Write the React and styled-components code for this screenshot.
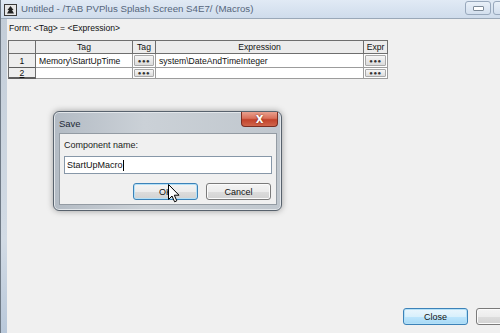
import React from "react";
import styled, { createGlobalStyle } from "styled-components";

const GlobalStyle = createGlobalStyle`
  body {
    margin: 0;
    background: #f0f0f0;
    font-family: "Liberation Sans", Arial, sans-serif;
  }
`;

const Screen = styled.div`
  position: relative;
  display: flex;
  flex-direction: column;
  width: 500px;
  height: 333px;
  overflow: hidden;
  box-sizing: border-box;
  border-left: 1px solid #6f7a86;
  background: #f0f0f0;
`;

const TitleBar = styled.div`
  display: flex;
  align-items: flex-start;
  flex-shrink: 0;
  height: 18px;
  margin-right: -30px;
  padding-right: 11px;
  background: linear-gradient(#e1eaf5, #cfdcec);
  border-bottom: 1px solid #9aa8b8;
`;

const AppIcon = styled.svg`
  flex-shrink: 0;
  margin: 4px 0 0 3px;
`;

const Title = styled.div`
  flex: 1;
  margin-left: 4px;
  line-height: 18px;
  font-size: 9.7px;
  color: #56667c;
  white-space: nowrap;
`;

const CaptionButton = styled.div`
  display: flex;
  align-items: center;
  justify-content: center;
  flex-shrink: 0;
  width: 26px;
  height: 14px;
  margin: 1px 0 0 2px;
  box-sizing: border-box;
  border: 1px solid #98a8bc;
  border-radius: 3px;
  background: linear-gradient(#e9f0f8, #d3dfee);
  span {
    width: 9px;
    height: 3px;
    border: 1px solid #7d8a98;
    border-radius: 1px;
    background: #fff;
  }
`;

const Body = styled.div`
  display: flex;
  flex: 1;
`;

const FrameStrip = styled.div`
  width: 6px;
  flex-shrink: 0;
  background: linear-gradient(#c3cdd8, #d2dbe5 70%, #b9c8da);
`;

const Content = styled.div`
  display: flex;
  flex-direction: column;
  flex: 1;
  margin-right: -60px;
  padding: 3px 0 8px 1px;
  background: #f0f0f0;
`;

const FormLabel = styled.div`
  padding-left: 1px;
  line-height: 12px;
  font-size: 8.6px;
  color: #111;
`;

const Grid = styled.div`
  display: grid;
  grid-template-columns: 27px 97px 23px 208px 24px;
  grid-template-rows: 13px 14px 11px;
  width: max-content;
  margin-top: 6px;
  border-top: 1px solid #6e6e6e;
  border-left: 1px solid #6e6e6e;
  font-size: 8.6px;
  color: #111;
`;

const HeadCell = styled.div`
  display: flex;
  align-items: center;
  justify-content: center;
  box-sizing: border-box;
  background: #ececec;
  border-right: 1px solid #6e6e6e;
  border-bottom: 1px solid #6e6e6e;
`;

const NumCell = styled(HeadCell)`
  background: #eeeeee;
  border-bottom: ${(p) => (p.$last ? "2px" : "1px")} solid #5e5e5e;
  text-decoration: ${(p) => (p.$last ? "underline" : "none")};
`;

const DataCell = styled.div`
  display: flex;
  align-items: center;
  box-sizing: border-box;
  padding-left: 3px;
  background: #fff;
  border-right: 1px solid #9c9c9c;
  border-bottom: 1px solid #9c9c9c;
  white-space: nowrap;
  overflow: hidden;
`;

const ButtonCell = styled.div`
  display: flex;
  align-items: center;
  justify-content: center;
  box-sizing: border-box;
  padding: 1px;
  background: #fff;
  border-right: 1px solid #9c9c9c;
  border-bottom: 1px solid #9c9c9c;
`;

const DotsButton = styled.div`
  display: flex;
  align-items: center;
  justify-content: center;
  width: 100%;
  height: 100%;
  box-sizing: border-box;
  border: 1px solid #a9a9a9;
  border-radius: 1px;
  background: linear-gradient(#f6f6f6, #dcdcdc);
  font-size: 6px;
  letter-spacing: 0.5px;
  color: #333;
`;

const Footer = styled.div`
  display: flex;
  justify-content: flex-end;
  gap: 8px;
  margin-top: auto;
  padding-right: 19px;
`;

const PushButton = styled.div`
  display: flex;
  align-items: center;
  justify-content: center;
  width: 65px;
  height: 17px;
  box-sizing: border-box;
  border: 1px solid ${(p) => (p.$focus ? "#3c82b8" : "#7a7a7a")};
  border-radius: 3px;
  background: ${(p) =>
    p.$hot
      ? "linear-gradient(#eaf6fd 0%, #d9f0fc 50%, #bee6fd 51%, #a7d9f5 100%)"
      : "linear-gradient(#f4f4f4 0%, #ececec 50%, #dddddd 51%, #d2d2d2 100%)"};
  box-shadow: ${(p) => (p.$focus ? "inset 0 0 0 1px #b4e0f7" : "inset 0 0 0 1px #fbfbfb")};
  font-size: 9px;
  color: #111;
`;

const Dialog = styled.div`
  position: absolute;
  left: 52px;
  top: 111px;
  display: flex;
  flex-direction: column;
  width: 229px;
  height: 100px;
  box-sizing: border-box;
  padding: 0 4px 5px 5px;
  border: 1px solid #58626d;
  border-radius: 6px;
  background: linear-gradient(90deg, #b3bbc4, #cbd1d7 40%, #c0c7ce);
  box-shadow: 0 0 6px rgba(0, 0, 0, 0.35), inset 0 0 0 1px #e2e6ea;
`;

const DialogHead = styled.div`
  display: flex;
  align-items: flex-start;
  height: 21px;
`;

const DialogTitle = styled.div`
  flex: 1;
  padding: 6px 0 0 0;
  font-size: 9.5px;
  color: #1e2a36;
`;

const CloseX = styled.div`
  display: flex;
  align-items: center;
  justify-content: center;
  width: 37px;
  height: 15px;
  margin-right: -1px;
  box-sizing: border-box;
  border: 1px solid #7a2e22;
  border-top: none;
  border-radius: 0 0 4px 4px;
  background: linear-gradient(#e9a08e 0%, #d9705a 45%, #c2432b 55%, #d0664c 100%);
  color: #fff;
  font-family: "DejaVu Sans", sans-serif;
  font-size: 10px;
  font-weight: bold;
  text-shadow: 0 0 2px #6b1f12;
`;

const Client = styled.div`
  display: flex;
  flex-direction: column;
  flex: 1;
  padding: 5px 4px 4px 4px;
  border: 1px solid #939ba3;
  background: #f0f0f0;
`;

const FieldLabel = styled.div`
  line-height: 12px;
  font-size: 9px;
  color: #222;
`;

const TextBox = styled.div`
  display: flex;
  align-items: center;
  height: 18px;
  margin-top: 5px;
  padding-left: 2px;
  box-sizing: border-box;
  border: 1px solid #8797a8;
  background: #fff;
  font-size: 9px;
  color: #111;
`;

const Caret = styled.span`
  display: inline-block;
  width: 1px;
  height: 11px;
  background: #000;
`;

const DialogButtons = styled.div`
  display: flex;
  justify-content: flex-end;
  gap: 8px;
  margin-top: 9px;
  padding-right: 1px;
`;

const Pointer = styled.svg`
  position: absolute;
  left: 167px;
  top: 184px;
`;

export default function App() {
  return (
    <>
      <GlobalStyle />
      <Screen>
        <TitleBar>
          <AppIcon width="13" height="12" viewBox="0 0 13 12">
            <rect x="0.5" y="0.5" width="12" height="11" fill="#e6e6e6" stroke="#3a3a3a" />
            <path d="M6.5 2 L9.5 6 L8 6 L10 9.5 L3 9.5 L5 6 L3.5 6 Z" fill="#222" />
          </AppIcon>
          <Title>Untitled - /TAB PVPlus Splash Screen S4E7/ (Macros)</Title>
          <CaptionButton>
            <span />
          </CaptionButton>
          <CaptionButton />
        </TitleBar>
        <Body>
          <FrameStrip />
          <Content>
            <FormLabel>Form: &lt;Tag&gt; = &lt;Expression&gt;</FormLabel>
            <Grid>
              <HeadCell />
              <HeadCell>Tag</HeadCell>
              <HeadCell>Tag</HeadCell>
              <HeadCell>Expression</HeadCell>
              <HeadCell>Expr</HeadCell>

              <NumCell>1</NumCell>
              <DataCell>Memory\StartUpTime</DataCell>
              <ButtonCell>
                <DotsButton>●●●</DotsButton>
              </ButtonCell>
              <DataCell>system\DateAndTimeInteger</DataCell>
              <ButtonCell>
                <DotsButton>●●●</DotsButton>
              </ButtonCell>

              <NumCell $last>2</NumCell>
              <DataCell />
              <ButtonCell>
                <DotsButton>●●●</DotsButton>
              </ButtonCell>
              <DataCell />
              <ButtonCell>
                <DotsButton>●●●</DotsButton>
              </ButtonCell>
            </Grid>
            <Footer>
              <PushButton $focus $hot>
                Close
              </PushButton>
              <PushButton />
            </Footer>
          </Content>
        </Body>

        <Dialog>
          <DialogHead>
            <DialogTitle>Save</DialogTitle>
            <CloseX>X</CloseX>
          </DialogHead>
          <Client>
            <FieldLabel>Component name:</FieldLabel>
            <TextBox>
              StartUpMacro
              <Caret />
            </TextBox>
            <DialogButtons>
              <PushButton $focus>OK</PushButton>
              <PushButton>Cancel</PushButton>
            </DialogButtons>
          </Client>
        </Dialog>

        <Pointer width="13" height="19" viewBox="0 0 13 19">
          <path
            d="M0.5 0.5 L0.5 15.5 L4 12 L6.6 17.8 L8.8 16.8 L6.3 11.2 L11 11.2 Z"
            fill="#fff"
            stroke="#000"
            strokeWidth="1"
            strokeLinejoin="round"
          />
        </Pointer>
      </Screen>
    </>
  );
}
